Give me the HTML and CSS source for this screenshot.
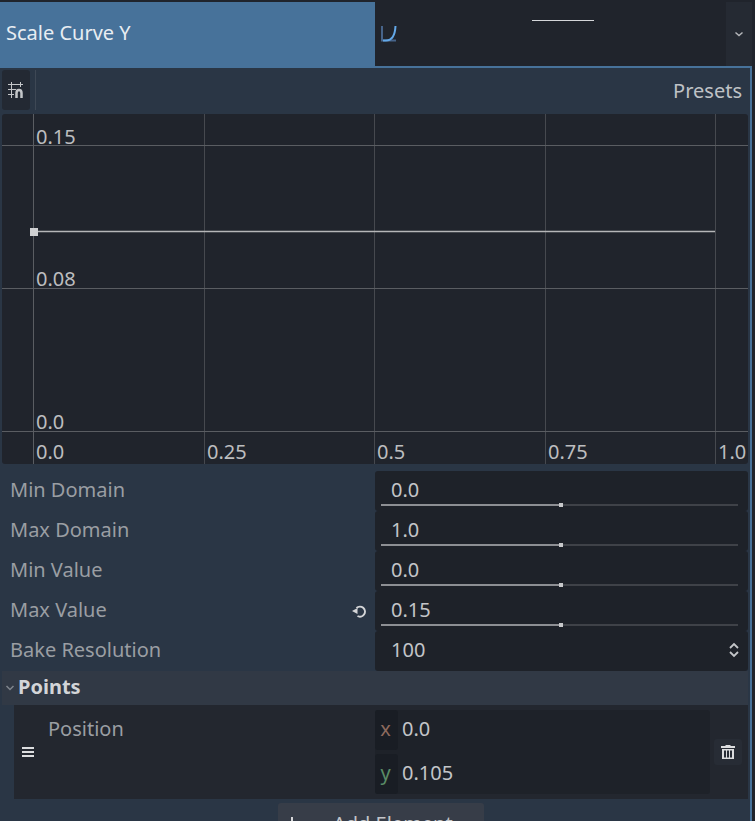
FILE: index.html
```html
<!DOCTYPE html>
<html lang="en">
<head>
<meta charset="utf-8">
<title>Scale Curve Y</title>
<link rel="stylesheet" href="styles.css">
</head>
<body>
<div class="inspector">
  <div class="head">
    <div class="head-label">Scale Curve Y</div>
    <div class="head-value">
      <svg class="curve-icon" width="16" height="16" viewBox="0 0 16 16"><path class="ci-a" d="M1 0V14.500H15"/><path class="ci-b" d="M2 14.500H5C10 14.500 14 10 14.500 0"/></svg>
      <span class="thumb-line"></span>
    </div>
    <div class="head-drop"><svg width="10" height="6" viewBox="0 0 10 6"><path class="chev" d="M1.500 1.500L5 4.500L8.500 1.500"/></svg></div>
  </div>
  <div class="panel">
    <div class="toolbar">
      <div class="snap">
        <svg width="16" height="16" viewBox="0 0 16 16"><path class="snap-grid" d="M0 2.500H15M0 7.500H8M0 12.500H6M3.500 0V16M12.500 0V5"/><path class="snap-mag" d="M8.500 16V11C8.500 7 13.500 7 13.500 11V16"/></svg>
      </div>
      <div class="tool-sep"></div>
      <div class="presets">Presets</div>
    </div>
    <svg class="graph" width="746" height="350" viewBox="0 0 746 350">
      <path class="grid-v" d="M202.500 0V350M372.500 0V350M543.500 0V350M713.500 0V350"/>
      <path class="grid" d="M31.500 0V350M0 31.500H746M0 174.500H746M0 317.500H746"/>
      <path class="curve" d="M32 117.500H713"/>
      <rect class="point" x="28" y="114" width="8" height="8"/>
      <text class="g-label" x="34" y="30">0.15</text>
      <text class="g-label" x="34" y="172">0.08</text>
      <text class="g-label" x="34" y="315">0.0</text>
      <text class="g-label" x="34" y="345">0.0</text>
      <text class="g-label" x="205" y="345">0.25</text>
      <text class="g-label" x="375" y="345">0.5</text>
      <text class="g-label" x="546" y="345">0.75</text>
      <text class="g-label" x="716" y="345">1.0</text>
    </svg>
    <div class="props">
      <div class="prop">
        <div class="prop-name">Min Domain</div>
        <div class="prop-value"><span class="num">0.0</span><div class="slider"><div class="fill"></div><div class="grab"></div></div></div>
      </div>
      <div class="prop">
        <div class="prop-name">Max Domain</div>
        <div class="prop-value"><span class="num">1.0</span><div class="slider"><div class="fill"></div><div class="grab"></div></div></div>
      </div>
      <div class="prop">
        <div class="prop-name">Min Value</div>
        <div class="prop-value"><span class="num">0.0</span><div class="slider"><div class="fill"></div><div class="grab"></div></div></div>
      </div>
      <div class="prop">
        <div class="prop-name">Max Value
          <svg class="revert" width="14" height="14" viewBox="0 0 14 14"><path class="rev-s" d="M4.500 4A5 5 0 1 1 5.500 12"/><path class="rev-f" d="M0 7L5.500 4V10Z"/></svg>
        </div>
        <div class="prop-value"><span class="num">0.15</span><div class="slider"><div class="fill"></div><div class="grab"></div></div></div>
      </div>
      <div class="prop">
        <div class="prop-name">Bake Resolution</div>
        <div class="prop-value spin"><span class="num">100</span>
          <svg class="updown" width="12" height="16" viewBox="0 0 12 16"><path class="ud" d="M2 6L6 2L10 6M2 10L6 14L10 10"/></svg>
        </div>
      </div>
    </div>
    <div class="section"><svg width="10" height="6" viewBox="0 0 10 6"><path class="chev dim" d="M1.500 1L5 4.500L8.500 1"/></svg><span class="sec-title">Points</span></div>
    <div class="element">
      <div class="handle"><span></span><span></span><span></span></div>
      <div class="el-name">Position</div>
      <div class="vec">
        <div class="vec-row"><span class="axis ax">x</span><span class="vec-num">0.0</span></div>
        <div class="vec-row"><span class="axis ay">y</span><span class="vec-num">0.105</span></div>
      </div>
      <div class="trash">
        <svg width="14" height="14" viewBox="0 0 14 14"><path class="trash-f" d="M0 1H4.500V0H9.500V1H14V3H0ZM1 4H13V14H1ZM3 5.500V12.500H5V5.500ZM6 5.500V12.500H8V5.500ZM9 5.500V12.500H11V5.500Z"/></svg>
      </div>
    </div>
    <div class="add-row">
      <div class="add-btn"><svg width="14" height="14" viewBox="0 0 14 14"><path class="plus" d="M7 1V13M1 7H13"/></svg><span>Add Element</span></div>
    </div>
  </div>
</div>
</body>
</html>
```
FILE: styles.css
```css
html, body {
  margin: 0;
  padding: 0;
  height: 821px;
  overflow: hidden;
  background: #20242c;
}
.inspector {
  width: 755px;
  height: 821px;
  overflow: hidden;
  padding-top: 2px;
  box-sizing: border-box;
  font-family: "Noto Sans", sans-serif;
  font-size: 20px;
  background: #20242c;
}
.head {
  display: flex;
  height: 64px;
  width: 752px;
}
.head-label {
  width: 375px;
  height: 66px;
  background: #47729a;
  color: #e8edf2;
  padding: 0 0 6px 6px;
  box-sizing: border-box;
  display: flex;
  align-items: center;
}
.head-value {
  flex: 1;
  display: flex;
  position: relative;
  background: #20242c;
  padding-left: 6px;
  align-items: center;
}
.thumb-line {
  position: absolute;
  left: 157px;
  top: 18px;
  width: 62px;
  height: 1px;
  background: #d5d7da;
}
.curve-icon { margin-top: 0; }
.ci-a { fill: none; stroke: #47648a; stroke-width: 2; }
.ci-b { fill: none; stroke: #63a8e8; stroke-width: 2; }
.head-drop {
  width: 26px;
  background: #252a33;
  display: flex;
  align-items: center;
  justify-content: center;
}
.chev { fill: none; stroke: #b4b6ba; stroke-width: 1.500; }
.chev.dim { stroke: #7f858d; }
.ud { fill: none; stroke: #c4c6c9; stroke-width: 1.800; }
.panel {
  width: 752px;
  height: 755px;
  box-sizing: border-box;
  background: #2a3645;
  border-top: 2px solid #47729a;
  border-right: 2px solid #47729a;
  padding-left: 2px;
  overflow: hidden;
}
.toolbar {
  display: flex;
  height: 46px;
  padding-top: 2px;
  box-sizing: border-box;
}
.snap {
  width: 28px;
  height: 40px;
  background: #232933;
  border-radius: 3px;
  display: flex;
  align-items: center;
  justify-content: center;
}
.snap-grid { fill: none; stroke: #c4c6c9; stroke-width: 1; }
.snap-mag { fill: none; stroke: #c4c6c9; stroke-width: 2.500; }
.tool-sep {
  width: 1px;
  height: 40px;
  margin-left: 5px;
  background: #3e4855;
}
.presets {
  margin-left: auto;
  margin-right: 8px;
  color: #bfc2c6;
  height: 40px;
  display: flex;
  align-items: center;
}
.graph {
  display: block;
  background: #20242c;
  border-radius: 3px;
}
.grid { stroke: #5a5d62; stroke-width: 1; fill: none; }
.grid-v { stroke: #46494f; stroke-width: 1; fill: none; }
.curve { stroke: #b5b6b8; stroke-width: 1.500; fill: none; }
.point { fill: #cfd0d2; }
.g-label {
  font-family: "Noto Sans", sans-serif;
  font-size: 20px;
  fill: #bcbdbf;
}
.props {
  padding-top: 7px;
  width: 746px;
}
.prop {
  display: flex;
  height: 40px;
}
.prop-name {
  width: 373px;
  box-sizing: border-box;
  padding: 0 9px 4px 8px;
  color: #9a9ea3;
  display: flex;
  align-items: center;
  justify-content: space-between;
}
.revert { margin-top: 3px; }
.rev-s { fill: none; stroke: #d5d6d8; stroke-width: 2; }
.rev-f { fill: #d5d6d8; }
.prop-value {
  flex: 1;
  position: relative;
  background: #1e2229;
  border-radius: 3px;
  color: #c3c5c8;
  display: flex;
  align-items: center;
  padding: 0 0 2px 16px;
  box-sizing: border-box;
}
.num { line-height: 1; }
.slider {
  position: absolute;
  left: 6px;
  right: 10px;
  top: 33px;
  height: 2px;
  background: #3f4248;
}
.fill {
  width: 180px;
  height: 2px;
  background: #8d8f93;
}
.grab {
  position: absolute;
  left: 178px;
  top: -1px;
  width: 4px;
  height: 4px;
  background: #c8c9cb;
}
.spin {
  justify-content: space-between;
  padding-right: 8px;
}
.section {
  display: flex;
  align-items: center;
  height: 34px;
  width: 746px;
  background: #313945;
  font-weight: 700;
  color: #d3d5d8;
  padding-left: 3px;
  box-sizing: border-box;
  gap: 3px;
}
.sec-title { padding-bottom: 4px; }
.element {
  display: flex;
  width: 734px;
  height: 94px;
  margin-left: 12px;
  background: #23272f;
}
.handle {
  width: 12px;
  margin: 0 0 0 8px;
  display: flex;
  flex-direction: column;
  justify-content: center;
  gap: 2px;
}
.handle span {
  display: block;
  height: 2px;
  background: #dcdddf;
}
.el-name {
  width: 329px;
  padding: 10px 0 0 14px;
  box-sizing: border-box;
  color: #9a9ea3;
}
.vec {
  width: 335px;
  margin: 5px 0 5px 12px;
  background: #1e2229;
  border-radius: 3px;
  display: flex;
  flex-direction: column;
  gap: 4px;
}
.vec-row {
  display: flex;
  align-items: center;
  height: 40px;
  color: #c3c5c8;
}
.axis {
  width: 23px;
  height: 40px;
  background: #191d24;
  border-radius: 3px;
  display: flex;
  align-items: center;
  justify-content: center;
  padding: 0 2px 4px 0;
  box-sizing: border-box;
}
.ax { color: #8e6a5d; }
.ay { color: #5a8b66; }
.vec-num { margin-left: 4px; padding-bottom: 4px; }
.trash {
  width: 28px;
  height: 26px;
  margin: 34px 0 0 4px;
  background: #272c35;
  border-radius: 3px;
  display: flex;
  align-items: center;
  justify-content: center;
}
.trash-f { fill: #dcdddf; fill-rule: evenodd; }
.add-row {
  display: flex;
  margin-top: 4px;
  padding-left: 276px;
}
.add-btn {
  width: 206px;
  height: 40px;
  background: #373d48;
  border-radius: 3px;
  display: flex;
  align-items: center;
  padding: 0 0 0 7px;
  box-sizing: border-box;
  gap: 34px;
  color: #c3c5c8;
}
.plus { fill: none; stroke: #d5d6d8; stroke-width: 2; }
```
